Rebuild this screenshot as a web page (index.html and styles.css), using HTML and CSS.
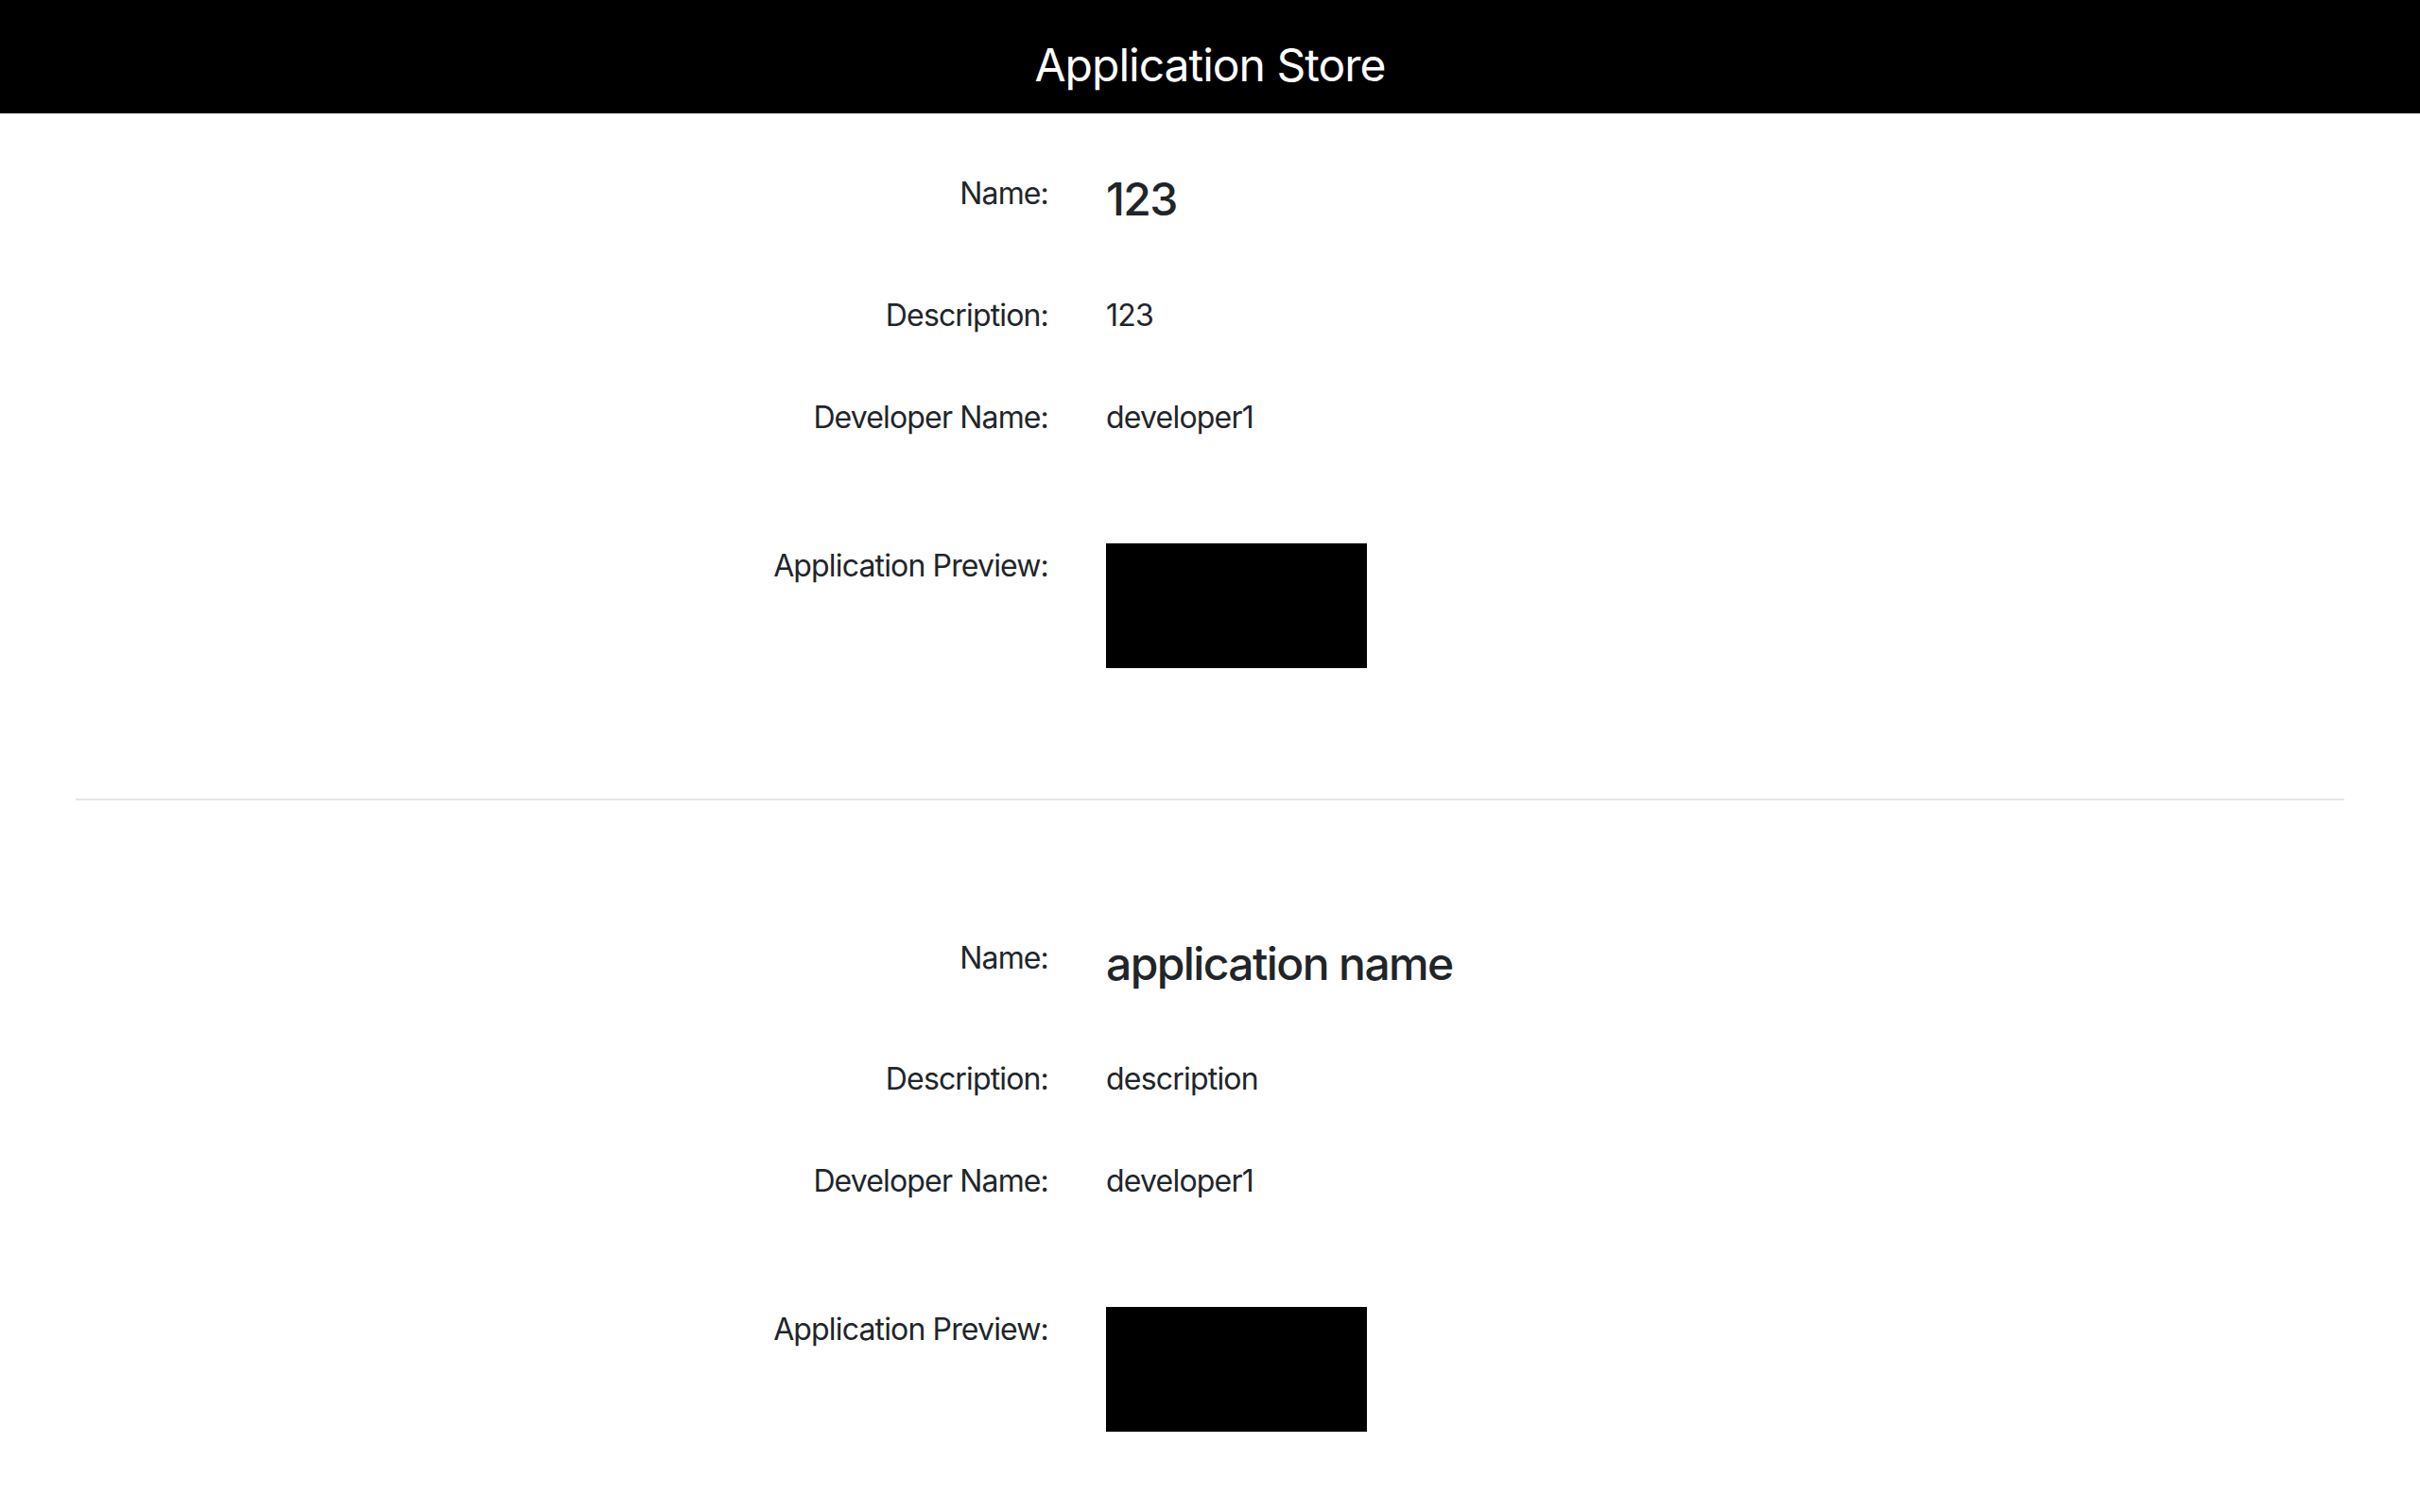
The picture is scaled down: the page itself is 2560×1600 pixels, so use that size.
FILE: index.html
```html
<!DOCTYPE html>
<html lang="en">
<head>
<meta charset="utf-8">
<title>Application Store</title>
<link rel="stylesheet" href="styles.css">
</head>
<body>
<header class="topbar">
  <h1 class="topbar-title">Application Store</h1>
</header>
<main class="store">
  <section class="app">
    <div class="field">
      <div class="field-label">Name:</div>
      <h3 class="field-value app-name">123</h3>
    </div>
    <div class="field">
      <div class="field-label">Description:</div>
      <div class="field-value">123</div>
    </div>
    <div class="field">
      <div class="field-label">Developer Name:</div>
      <div class="field-value">developer1</div>
    </div>
    <div class="field field-preview">
      <div class="field-label">Application Preview:</div>
      <div class="field-value"><div class="preview"></div></div>
    </div>
  </section>
  <hr class="divider">
  <section class="app">
    <div class="field">
      <div class="field-label">Name:</div>
      <h3 class="field-value app-name">application name</h3>
    </div>
    <div class="field">
      <div class="field-label">Description:</div>
      <div class="field-value">description</div>
    </div>
    <div class="field">
      <div class="field-label">Developer Name:</div>
      <div class="field-value">developer1</div>
    </div>
    <div class="field field-preview">
      <div class="field-label">Application Preview:</div>
      <div class="field-value"><div class="preview"></div></div>
    </div>
  </section>
  <hr class="divider">
</main>
</body>
</html>
```

FILE: styles.css
```css
html, body {
  margin: 0;
  padding: 0;
  background: #fff;
}

body {
  font-family: Inter, "Liberation Sans", Arial, sans-serif;
  font-size: 32px;
  line-height: 1.5;
  color: #212529;
}

.topbar {
  height: 120px;
  box-sizing: border-box;
  padding-top: 18px;
  background: #000;
  display: flex;
  align-items: center;
  justify-content: center;
}

.topbar-title {
  margin: 0;
  color: #fff;
  font-size: 48px;
  font-weight: 400;
  line-height: 1.2;
  letter-spacing: -1px;
}

.store {
  padding: 0 80px;
}

.app {
  padding-top: 61px;
  padding-bottom: 138px;
}

.divider + .app {
  padding-top: 143px;
}

.field {
  display: grid;
  grid-template-columns: 1029px 1fr;
  column-gap: 61px;
  margin-bottom: 60px;
  align-items: start;
}

.field:last-child {
  margin-bottom: 0;
}

.field-preview {
  margin-top: 109px;
}

.field-label {
  text-align: right;
  color: #212529;
  letter-spacing: -0.85px;
}

.field-value {
  margin: 0;
  letter-spacing: -0.8px;
}

.app-name {
  font-size: 48px;
  font-weight: 500;
  line-height: 1.2;
  padding-top: 1px;
  margin-bottom: 10px;
  letter-spacing: -1.6px;
}

.preview {
  width: 276px;
  height: 132px;
  background: #000;
}

.divider {
  margin: 0;
  border: 0;
  border-top: 2px solid #e6e6e6;
}
```
